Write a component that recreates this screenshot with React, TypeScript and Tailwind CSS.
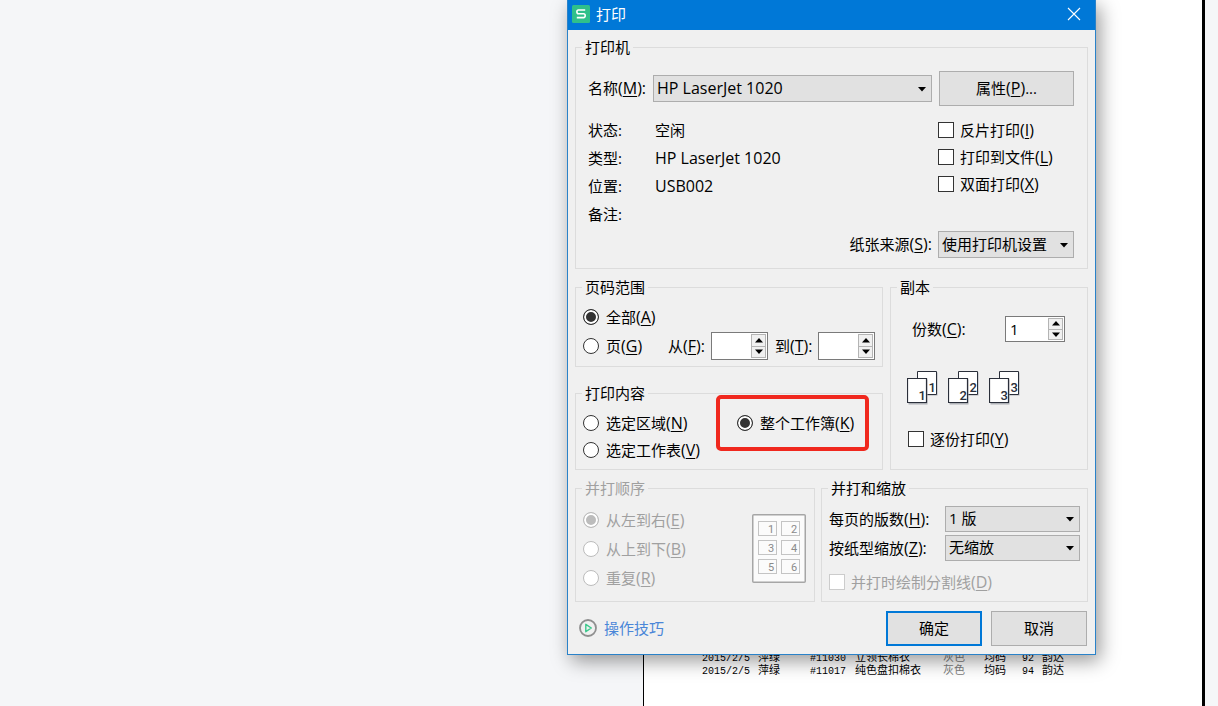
import { useState, type ReactNode } from "react";
import clsx from "clsx";

const rows = [
  { date: "2015/2/5", brand: "萍绿", code: "#11030", name: "立领长棉衣", color: "灰色", size: "均码", qty: "92", courier: "韵达" },
  { date: "2015/2/5", brand: "萍绿", code: "#11017", name: "纯色盘扣棉衣", color: "灰色", size: "均码", qty: "94", courier: "韵达" },
];

// Label with its mnemonic, e.g. 名称(M):
function Caption({ text, hot, end = "" }: { text: string; hot: string; end?: string }) {
  return (
    <span className="whitespace-nowrap">
      {text}
      <span className="text-[16px]">
        (<span className="underline underline-offset-2">{hot}</span>){end}
      </span>
    </span>
  );
}

function Group({
  title,
  disabled,
  className,
  children,
}: {
  title: string;
  disabled?: boolean;
  className?: string;
  children: ReactNode;
}) {
  return (
    <fieldset
      disabled={disabled}
      className={clsx("min-w-0 border border-[#dcdcdc]", disabled && "text-[#a0a0a0]")}
    >
      <legend className="ml-[6px] px-[3px]">{title}</legend>
      <div className={className}>{children}</div>
    </fieldset>
  );
}

function Radio({
  name,
  checked,
  className,
  children,
}: {
  name: string;
  checked?: boolean;
  className?: string;
  children: ReactNode;
}) {
  return (
    <label className={clsx("flex items-center gap-[7px]", className)}>
      <input
        type="radio"
        name={name}
        defaultChecked={checked}
        className="size-4 shrink-0 appearance-none rounded-full border border-[#333] bg-white checked:bg-[#333] checked:shadow-[inset_0_0_0_2px_white] disabled:border-[#bcbcbc] disabled:checked:bg-[#bcbcbc]"
      />
      {children}
    </label>
  );
}

function Check({ disabled, className, children }: { disabled?: boolean; className?: string; children: ReactNode }) {
  return (
    <label className={clsx("flex items-center gap-[6px]", disabled && "text-[#a0a0a0]", className)}>
      <input
        type="checkbox"
        disabled={disabled}
        className="size-4 shrink-0 appearance-none border border-[#333] bg-white checked:bg-[#333] checked:shadow-[inset_0_0_0_3px_white] disabled:border-[#cccccc]"
      />
      {children}
    </label>
  );
}

function Select({ id, options, className }: { id: string; options: string[]; className?: string }) {
  return (
    <div className={clsx("relative", className)}>
      <select
        id={id}
        className="block h-full w-full appearance-none border border-[#adadad] bg-[#e1e1e1] pb-[2px] pl-[3px] pr-6"
      >
        {options.map((o) => (
          <option key={o}>{o}</option>
        ))}
      </select>
      <svg
        className="pointer-events-none absolute right-[6px] top-1/2 -mt-[2px]"
        width="8"
        height="5"
        viewBox="0 0 8 5"
      >
        <path d="M0 0h8L4 4.5z" fill="#000" />
      </svg>
    </div>
  );
}

function Spinner({ id, initial = "", className }: { id: string; initial?: string; className?: string }) {
  const [value, setValue] = useState(initial);
  const step = (d: number) => setValue(String(Math.max(1, (Number(value) || 0) + d)));

  return (
    <div className={clsx("flex border border-[#7a7a7a] bg-white p-px", className)}>
      <input
        id={id}
        type="text"
        value={value}
        onChange={(e) => setValue(e.target.value)}
        className="w-0 min-w-0 flex-1 bg-transparent pl-[3px] outline-none"
      />
      <div className="flex w-[15px] flex-col border border-[#b4b4b4] bg-[#f0f0f0]">
        <button
          type="button"
          aria-label="增加"
          onClick={() => step(1)}
          className="flex flex-1 items-center justify-center border-b border-[#b4b4b4]"
        >
          <svg width="8" height="5" viewBox="0 0 8 5">
            <path d="M0 4.5h8L4 0z" fill="#000" />
          </svg>
        </button>
        <button
          type="button"
          aria-label="减少"
          onClick={() => step(-1)}
          className="flex flex-1 items-center justify-center"
        >
          <svg width="8" height="5" viewBox="0 0 8 5">
            <path d="M0 0.5h8L4 5z" fill="#000" />
          </svg>
        </button>
      </div>
    </div>
  );
}

function CopyIcon({ n }: { n: number }) {
  return (
    <svg
      width="32"
      height="34"
      viewBox="0 0 32 34"
      fontFamily="Roboto, sans-serif"
      fontSize="13"
      fontWeight="500"
      fill="#2a2f3a"
    >
      <path d="M11.5 1.5h19v23h-19z" fill="#aeb1b6" />
      <path d="M10.5 0.5h19v23h-19z" fill="#fff" stroke="#2a2f3a" />
      <text x="21.5" y="21">{n}</text>
      <path d="M1.5 8.5h19v25h-19z" fill="#aeb1b6" />
      <path d="M0.5 7.5h19v24h-19z" fill="#fff" stroke="#2a2f3a" strokeWidth="1.2" />
      <text x="11.5" y="28.5">{n}</text>
    </svg>
  );
}

function LayoutThumb() {
  return (
    <svg width="54" height="69" viewBox="0 0 54 69" fontFamily="Roboto, sans-serif" fontSize="11" fill="#8a8a8a">
      <rect x="0.75" y="0.75" width="52.5" height="67.5" rx="1" fill="#fbfbfb" stroke="#a6a6a6" strokeWidth="1.5" />
      {[1, 2, 3, 4, 5, 6].map((n, i) => {
        const x = 6.5 + (i % 2) * 23;
        const y = 7.5 + Math.floor(i / 2) * 19;
        return (
          <g key={n}>
            <rect x={x} y={y} width="18" height="14" fill="none" stroke="#c4c4c4" />
            <text x={x + 9.5} y={y + 11.5}>{n}</text>
          </g>
        );
      })}
    </svg>
  );
}

function Sheet() {
  return (
    <main className="ml-[643px] mr-[13px] flex min-h-screen flex-1 flex-col justify-end border-l border-r-3 border-black bg-white pb-7 pl-[58px]">
      <table className="w-[364px] table-fixed text-left font-['Liberation_Mono','Noto_Sans_CJK_SC',monospace] text-[11px] leading-[13px] text-black">
        <tbody>
          {rows.map((r) => (
            <tr key={r.code} className="h-[13px] whitespace-nowrap">
              <td className="w-[56px] p-0 text-[10px]">{r.date}</td>
              <td className="w-[52px] p-0">{r.brand}</td>
              <td className="w-[45px] p-0 text-[10px]">{r.code}</td>
              <td className="w-[88px] p-0">{r.name}</td>
              <td className="w-[41px] p-0 text-[#808080]">{r.color}</td>
              <td className="w-[38px] p-0">{r.size}</td>
              <td className="w-[20px] p-0 text-[10px]">{r.qty}</td>
              <td className="w-[24px] p-0">{r.courier}</td>
            </tr>
          ))}
        </tbody>
      </table>
    </main>
  );
}

function PrinterGroup() {
  const info = [
    ["状态:", "空闲"],
    ["类型:", "HP LaserJet 1020"],
    ["位置:", "USB002"],
    ["备注:", ""],
  ];

  return (
    <Group title="打印机" className="pb-[10px] pl-3 pr-[13px] pt-[14px]">
      <div className="flex items-center">
        <label htmlFor="printer" className="w-[65px] pb-[2px]">
          <Caption text="名称" hot="M" end=":" />
        </label>
        <Select id="printer" options={["HP LaserJet 1020"]} className="mr-[7px] h-[27px] flex-1 text-[16px]" />
        <button type="button" className="h-[35px] w-[135px] border border-[#adadad] bg-[#e1e1e1] pb-[2px]">
          <Caption text="属性" hot="P" />
          ...
        </button>
      </div>
      <div className="mt-[10px] flex justify-between">
        <dl className="grid grid-cols-[67px_auto]">
          {info.map(([k, v]) => (
            <div key={k} className="contents">
              <dt className="leading-7">{k}</dt>
              <dd className={clsx("leading-7", /^[A-Z]/.test(v) && "text-[16px]")}>{v}</dd>
            </div>
          ))}
        </dl>
        <div className="w-[136px]">
          <Check className="h-[27px]"><Caption text="反片打印" hot="I" /></Check>
          <Check className="h-[27px]"><Caption text="打印到文件" hot="L" /></Check>
          <Check className="h-[27px]"><Caption text="双面打印" hot="X" /></Check>
        </div>
      </div>
      <div className="mt-[3px] flex items-center justify-end gap-[6px]">
        <label htmlFor="source" className="pb-[2px]">
          <Caption text="纸张来源" hot="S" end=":" />
        </label>
        <Select id="source" options={["使用打印机设置"]} className="h-[27px] w-[136px]" />
      </div>
    </Group>
  );
}

function RangeGroup() {
  return (
    <Group title="页码范围" className="px-[7px] py-[6px]">
      <Radio name="range" checked className="h-7"><Caption text="全部" hot="A" /></Radio>
      <div className="flex h-[29px] items-end">
        <Radio name="range" className="h-7 w-[85px]"><Caption text="页" hot="G" /></Radio>
        <label htmlFor="from" className="w-[43px] leading-7"><Caption text="从" hot="F" end=":" /></label>
        <Spinner id="from" className="mr-[7px] h-7 w-[57px]" />
        <label htmlFor="to" className="w-[43px] leading-7"><Caption text="到" hot="T" end=":" /></label>
        <Spinner id="to" className="h-7 w-[57px]" />
      </div>
    </Group>
  );
}

function ContentGroup() {
  return (
    <Group title="打印内容" className="grid grid-cols-[154px_1fr] px-[7px] py-[6px]">
      <Radio name="content" className="h-[27px]"><Caption text="选定区域" hot="N" /></Radio>
      <div className="relative">
        <Radio name="content" checked className="h-[27px]"><Caption text="整个工作簿" hot="K" /></Radio>
        {/* red marker */}
        <span className="pointer-events-none absolute -left-[21px] -top-[14px] h-[56px] w-[153px] rounded-[5px] border-4 border-[#f0281e]" />
      </div>
      <Radio name="content" className="h-[27px]"><Caption text="选定工作表" hot="V" /></Radio>
    </Group>
  );
}

function CopiesGroup() {
  return (
    <Group title="副本" className="px-[16px] pb-[20px] pt-[19px]">
      <div className="flex items-center justify-between pl-[5px] pr-[6px]">
        <label htmlFor="copies"><Caption text="份数" hot="C" end=":" /></label>
        <Spinner id="copies" initial="1" className="h-[26px] w-[60px]" />
      </div>
      <div className="mt-[29px] flex gap-[9px]">
        <CopyIcon n={1} />
        <CopyIcon n={2} />
        <CopyIcon n={3} />
      </div>
      <Check className="mt-[24px] pl-px"><Caption text="逐份打印" hot="Y" /></Check>
    </Group>
  );
}

function OrderGroup() {
  return (
    <Group title="并打顺序" disabled className="flex items-start justify-between px-[8px] pb-[9px] pt-[7px]">
      <div className="-ml-px">
        <Radio name="order" checked className="h-[29px]"><Caption text="从左到右" hot="E" /></Radio>
        <Radio name="order" className="h-[29px]"><Caption text="从上到下" hot="B" /></Radio>
        <Radio name="order" className="h-[29px]"><Caption text="重复" hot="R" /></Radio>
      </div>
      <div className="pt-[9px]">
        <LayoutThumb />
      </div>
    </Group>
  );
}

function ScaleGroup() {
  return (
    <Group title="并打和缩放" className="px-[7px] pt-[8px]">
      <div className="flex items-center justify-between">
        <label htmlFor="pages"><Caption text="每页的版数" hot="H" end=":" /></label>
        <Select id="pages" options={["1 版"]} className="h-[26px] w-[135px]" />
      </div>
      <div className="mt-[3px] flex items-center justify-between">
        <label htmlFor="scale"><Caption text="按纸型缩放" hot="Z" end=":" /></label>
        <Select id="scale" options={["无缩放"]} className="h-[26px] w-[135px]" />
      </div>
      <Check disabled className="mt-[11px]"><Caption text="并打时绘制分割线" hot="D" /></Check>
    </Group>
  );
}

function PrintDialog() {
  return (
    <div
      role="dialog"
      aria-label="打印"
      className="absolute left-[567px] top-0 w-[529px] border-x border-b border-[#2a82c9] bg-[#f0f0f0] shadow-[4px_6px_18px_rgba(0,0,0,0.4)]"
    >
      <header className="flex h-[30px] items-center bg-[#0078d7] pb-[2px] pl-1 pr-[14px] text-white">
        <svg width="18" height="18" viewBox="0 0 18 18">
          <rect width="18" height="18" rx="1.5" fill="#2fc08a" />
          <path
            d="M13.2 5H6.4C5.4 5 4.9 5.6 4.9 6.8S5.4 8.8 6.4 8.8h5.2c1 0 1.6.6 1.6 1.8s-.6 2-1.6 2H4.8"
            fill="none"
            stroke="#fff"
            strokeWidth="1.6"
          />
        </svg>
        <h1 className="ml-[6px]">打印</h1>
        <button type="button" aria-label="关闭" className="ml-auto">
          <svg width="14" height="14" viewBox="0 0 14 14" stroke="#fff" strokeWidth="1.1">
            <path d="M1 1l12 12M13 1L1 13" />
          </svg>
        </button>
      </header>

      <form className="px-[7px] pb-[8px] pt-[7px]" onSubmit={(e) => e.preventDefault()}>
        <PrinterGroup />
        <div className="mt-[8px] grid grid-cols-[308px_1fr] gap-[7px]">
          <div className="flex flex-col gap-[16px]">
            <RangeGroup />
            <ContentGroup />
          </div>
          <CopiesGroup />
        </div>
        <div className="mt-[8px] grid grid-cols-[240px_1fr] gap-[6px]">
          <OrderGroup />
          <ScaleGroup />
        </div>
        <footer className="mt-[9px] flex items-center gap-[9px] pr-px">
          <a href="#tips" className="mr-auto flex items-center gap-[7px] pb-[2px] pl-1 text-[#4a86d8]">
            <svg width="18" height="18" viewBox="0 0 18 18" fill="none">
              <circle cx="9" cy="9" r="8" stroke="#8f8f8f" strokeWidth="1.8" />
              <path d="M6.8 5.3v7.4L12.3 9z" stroke="#3cc88c" strokeWidth="1.4" strokeLinejoin="round" />
            </svg>
            操作技巧
          </a>
          <button type="submit" className="h-[35px] w-[96px] border-2 border-[#0078d7] bg-[#e1e1e1] pb-[2px]">
            确定
          </button>
          <button type="button" className="h-[35px] w-[96px] border border-[#adadad] bg-[#e1e1e1] pb-[2px]">
            取消
          </button>
        </footer>
      </form>
    </div>
  );
}

export default function App() {
  return (
    <div className="relative flex min-h-screen bg-[#f5f6f8] font-['Open_Sans','Noto_Sans_CJK_SC',sans-serif] text-[15px] leading-5 text-black">
      <Sheet />
      <PrintDialog />
    </div>
  );
}
